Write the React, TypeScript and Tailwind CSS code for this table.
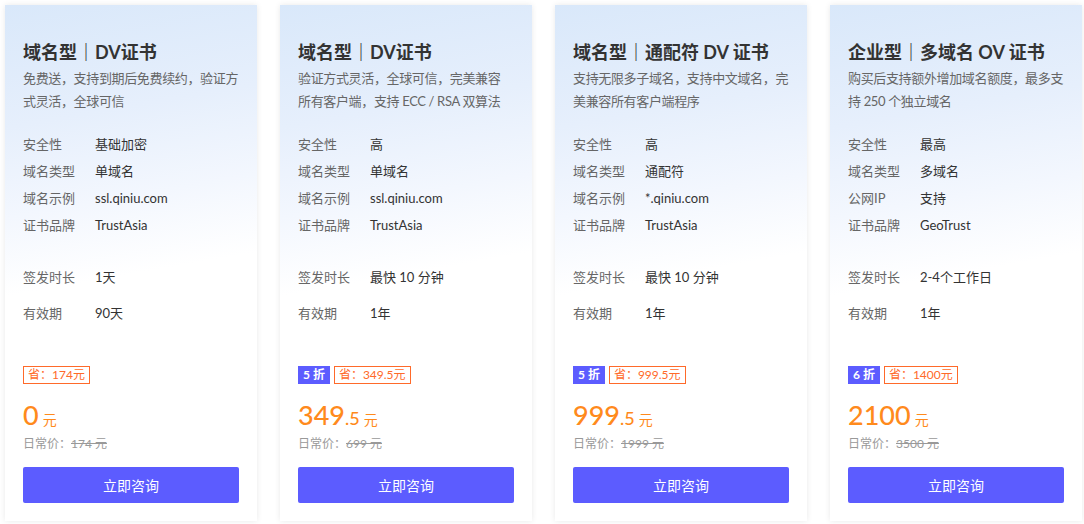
import React from 'react';

interface Plan {
  title: string;
  desc: string[];
  specs: [string, string][];
  timing: [string, string][];
  discount?: string;
  save: string;
  price: string;
  decimal?: string;
  original: string;
}

const plans: Plan[] = [
  {
    title: '域名型｜DV证书',
    desc: ['免费送，支持到期后免费续约，验证方', '式灵活，全球可信'],
    specs: [
      ['安全性', '基础加密'],
      ['域名类型', '单域名'],
      ['域名示例', 'ssl.qiniu.com'],
      ['证书品牌', 'TrustAsia'],
    ],
    timing: [
      ['签发时长', '1天'],
      ['有效期', '90天'],
    ],
    save: '省：174元',
    price: '0',
    original: '174 元',
  },
  {
    title: '域名型｜DV证书',
    desc: ['验证方式灵活，全球可信，完美兼容', '所有客户端，支持 ECC / RSA 双算法'],
    specs: [
      ['安全性', '高'],
      ['域名类型', '单域名'],
      ['域名示例', 'ssl.qiniu.com'],
      ['证书品牌', 'TrustAsia'],
    ],
    timing: [
      ['签发时长', '最快 10 分钟'],
      ['有效期', '1年'],
    ],
    discount: '5 折',
    save: '省：349.5元',
    price: '349',
    decimal: '.5',
    original: '699 元',
  },
  {
    title: '域名型｜通配符 DV 证书',
    desc: ['支持无限多子域名，支持中文域名，完', '美兼容所有客户端程序'],
    specs: [
      ['安全性', '高'],
      ['域名类型', '通配符'],
      ['域名示例', '*.qiniu.com'],
      ['证书品牌', 'TrustAsia'],
    ],
    timing: [
      ['签发时长', '最快 10 分钟'],
      ['有效期', '1年'],
    ],
    discount: '5 折',
    save: '省：999.5元',
    price: '999',
    decimal: '.5',
    original: '1999 元',
  },
  {
    title: '企业型｜多域名 OV 证书',
    desc: ['购买后支持额外增加域名额度，最多支', '持 250 个独立域名'],
    specs: [
      ['安全性', '最高'],
      ['域名类型', '多域名'],
      ['公网IP', '支持'],
      ['证书品牌', 'GeoTrust'],
    ],
    timing: [
      ['签发时长', '2-4个工作日'],
      ['有效期', '1年'],
    ],
    discount: '6 折',
    save: '省：1400元',
    price: '2100',
    original: '3500 元',
  },
];

const PlanCard: React.FC<{ plan: Plan }> = ({ plan }) => (
  <div className="w-[252px] h-[516px] flex flex-col px-[18px] pt-[34px] pb-[18px] bg-[linear-gradient(170deg,#d9e8fa_0%,#e6effc_22%,#f3f7fe_38%,#ffffff_52%)] shadow-[0_0_6px_rgba(0,0,0,0.09)]">
    <h3 className="text-[18px] leading-[26px] font-bold text-[#333]">{plan.title}</h3>
    <p className="mt-[2px] text-[13px] leading-[23px] tracking-[-0.35px] text-[#666] whitespace-nowrap">
      {plan.desc.map((line, i) => (
        <span key={i} className="block">{line}</span>
      ))}
    </p>

    <div className="mt-[18px]">
      {plan.specs.map(([label, value]) => (
        <div key={label} className="flex h-[27px] items-center text-[13px]">
          <span className="w-[72px] shrink-0 text-[#666]">{label}</span>
          <span className="text-[#333]">{value}</span>
        </div>
      ))}
    </div>

    <div className="mt-[21px]">
      {plan.timing.map(([label, value]) => (
        <div key={label} className="flex h-[36px] items-center text-[13px]">
          <span className="w-[72px] shrink-0 text-[#666]">{label}</span>
          <span className="text-[#333]">{value}</span>
        </div>
      ))}
    </div>

    <div className="mt-auto">
      <div className="flex items-center gap-[4px] h-[18px]">
        {plan.discount && (
          <span className="h-[18px] px-[5px] flex items-center bg-[#5c5cff] text-white text-[12px] font-bold">
            {plan.discount}
          </span>
        )}
        <span className="h-[18px] px-[4px] flex items-center border border-[#ff6a2a] text-[#ff6a2a] text-[12px]">
          {plan.save}
        </span>
      </div>

      <div className="mt-[16px] flex items-baseline text-[#ff8a1c] leading-[30px]">
        <span className="text-[27px] font-medium">{plan.price}</span>
        {plan.decimal && <span className="text-[18px] font-medium">{plan.decimal}</span>}
        <span className="ml-[4px] text-[14px]">元</span>
      </div>

      <div className="mt-[1px] text-[12px] leading-[16px] text-[#999]">
        日常价：<span className="line-through">{plan.original}</span>
      </div>

      <button className="mt-[15px] w-full h-[36px] rounded-[2px] bg-[#5c5cff] text-white text-[14px]">
        立即咨询
      </button>
    </div>
  </div>
);

export default function App() {
  return (
    <div
      className="w-[1084px] h-[524px] bg-white pt-[5px] pl-[5px] flex gap-[23px]"
      style={{ fontFamily: 'Lato, "Noto Sans CJK SC", sans-serif' }}
    >
      {plans.map((plan, i) => (
        <PlanCard key={i} plan={plan} />
      ))}
    </div>
  );
}
